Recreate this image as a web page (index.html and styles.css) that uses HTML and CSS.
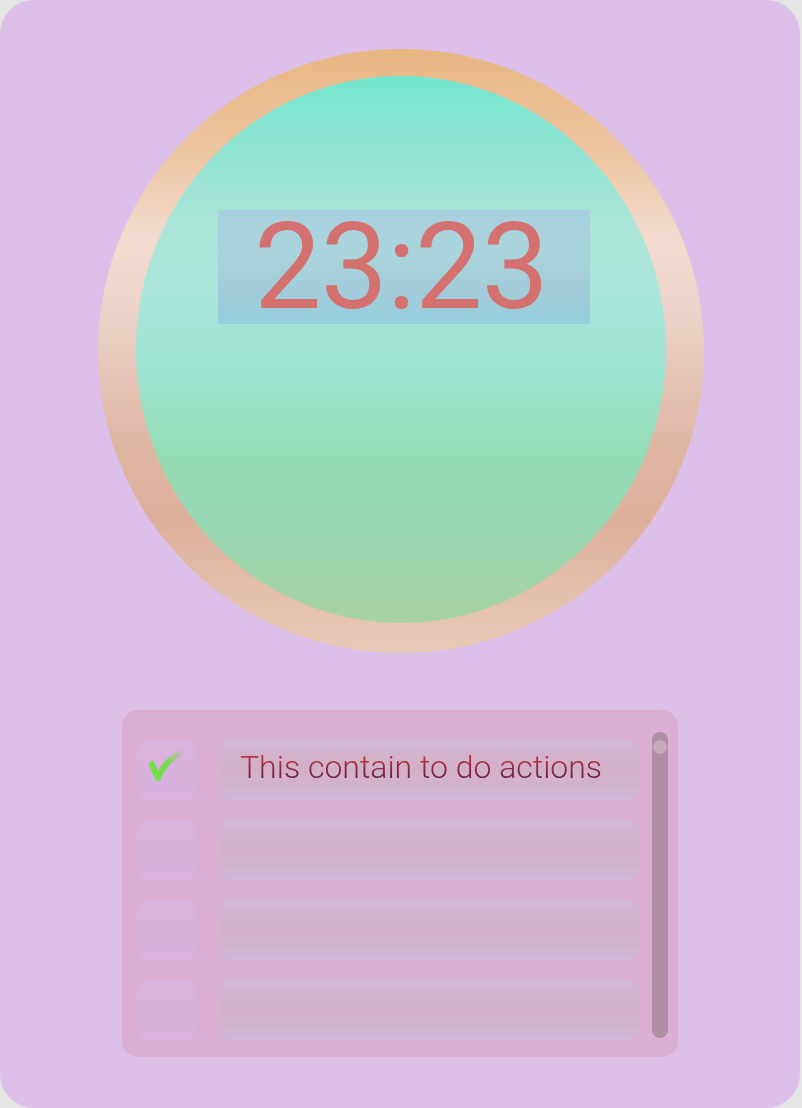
FILE: index.html
```html
<!DOCTYPE html>
<html>
<head>
<meta charset="utf-8">
<link rel="stylesheet" href="styles.css">
</head>
<body>
<div class="card">
  <div class="ring">
    <div class="face">
      <div class="time">23:23</div>
    </div>
  </div>
  <div class="panel">
    <div class="list">
      <div class="row">
        <div class="check">
          <svg width="60" height="60" viewBox="0 0 60 60">
            <defs>
              <linearGradient id="tick" x1="14" y1="0" x2="50" y2="0" gradientUnits="userSpaceOnUse">
                <stop offset="0" stop-color="#6ee24a"/>
                <stop offset="0.45" stop-color="#74dc4c"/>
                <stop offset="0.75" stop-color="#a8c09a" stop-opacity="0.7"/>
                <stop offset="1" stop-color="#c8b0c8" stop-opacity="0"/>
              </linearGradient>
            </defs>
            <path d="M15 24 C17 30 19 34 21 38 C25 28 33 17 48 12" fill="none" stroke="url(#tick)" stroke-width="6" stroke-linecap="round" stroke-linejoin="round"/>
          </svg>
        </div>
        <div class="task"><span class="task-text">This contain to do actions</span></div>
      </div>
      <div class="row">
        <div class="check"></div>
        <div class="task"></div>
      </div>
      <div class="row">
        <div class="check"></div>
        <div class="task"></div>
      </div>
      <div class="row">
        <div class="check"></div>
        <div class="task"></div>
      </div>
    </div>
    <div class="scrollbar"><div class="thumb"></div></div>
  </div>
</div>
</body>
</html>
```
FILE: styles.css
```css
html, body {
  margin: 0;
  padding: 0;
  background: #e4e4e4;
}

body {
  font-family: Roboto, "Liberation Sans", sans-serif;
}

.card {
  width: 800px;
  height: 1108px;
  background: #dcc0ea;
  border-radius: 34px;
  box-sizing: border-box;
  padding-top: 49px;
  display: flex;
  flex-direction: column;
  align-items: center;
}

.ring {
  width: 606px;
  height: 604px;
  box-sizing: border-box;
  padding: 27px 38px 30px;
  border-radius: 50%;
  margin-left: 2px;
  background: linear-gradient(to bottom,
    #e9b682 0%,
    #eec7a4 18%,
    #f3dbd0 32%,
    #ecd2c6 45%,
    #e0b6a4 65%,
    #dcaf9a 78%,
    #e6c2ae 92%,
    #e8cab8 100%);
}

.face {
  width: 530px;
  height: 547px;
  border-radius: 50%;
  background: linear-gradient(to bottom,
    #72e6d0 0%,
    #8ee4d2 12%,
    #ade6d8 28%,
    #a9e5da 40%,
    #9ee4d0 55%,
    #95dcb6 70%,
    #97d6b2 82%,
    #a8d3a2 100%);
  display: flex;
  flex-direction: column;
  align-items: center;
}

.time {
  margin-top: 134px;
  margin-left: 6px;
  width: 372px;
  height: 114px;
  background: linear-gradient(to bottom,
    rgba(168, 206, 226, 0.9) 0%,
    rgba(170, 210, 220, 0.85) 40%,
    rgba(162, 200, 218, 0.9) 70%,
    rgba(150, 206, 222, 0.95) 100%);
  color: #d4716f;
  font-size: 120px;
  line-height: 114px;
  text-align: center;
  letter-spacing: -1px;
  text-indent: -6px;
}

.panel {
  margin-top: 57px;
  width: 556px;
  height: 347px;
  box-sizing: border-box;
  background: #dcaed2;
  border-radius: 16px;
  display: flex;
  padding: 22px 10px 19px 15px;
  gap: 12px;
}

.list {
  flex: 1;
  display: flex;
  flex-direction: column;
  gap: 20px;
  padding-top: 8px;
}

.row {
  display: flex;
  gap: 21px;
  height: 60px;
}

.check {
  width: 60px;
  height: 60px;
  flex: none;
  border-radius: 12px;
  background: linear-gradient(to bottom, #ddb4e0 0%, #d6b0da 50%, #dab2e0 100%);
}

.check svg {
  display: block;
}

.task {
  flex: 1;
  height: 60px;
  box-sizing: border-box;
  border-radius: 12px;
  background: linear-gradient(to bottom,
    #cfbadb 0%,
    #d2b2cc 20%,
    #d3b0c8 50%,
    #d2b2ca 75%,
    #cdbadc 100%);
  display: flex;
  align-items: center;
  padding-left: 22px;
  padding-bottom: 7px;
}

.task-text {
  font-size: 32px;
  font-weight: 300;
  background: linear-gradient(to bottom, #d43c3c 0%, #b03040 35%, #7a2444 65%, #4e1838 100%);
  -webkit-background-clip: text;
  background-clip: text;
  color: transparent;
  line-height: 40px;
}

.scrollbar {
  width: 16px;
  height: 306px;
  flex: none;
  border-radius: 8px;
  background: #b08ea4;
  display: flex;
  justify-content: center;
  padding-top: 8px;
  box-sizing: border-box;
}

.thumb {
  width: 14px;
  height: 14px;
  border-radius: 50%;
  background: #c6aabb;
}
```
